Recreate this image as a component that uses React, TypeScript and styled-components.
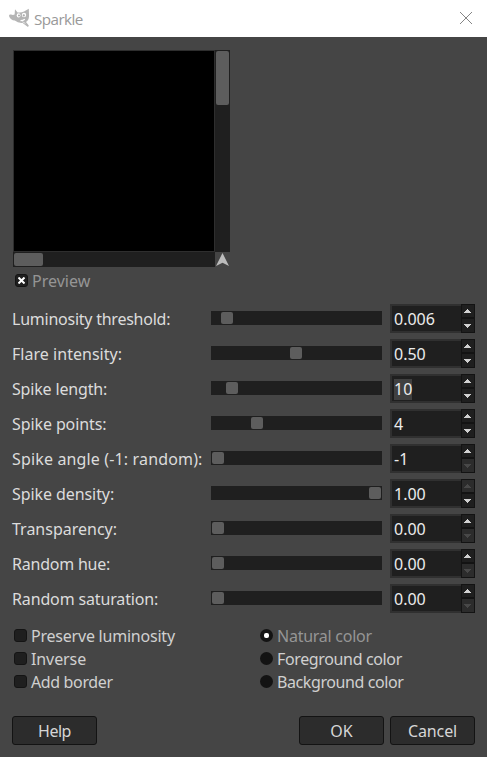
import React from "react";
import styled, { createGlobalStyle } from "styled-components";

const Global = createGlobalStyle`
  * { box-sizing: border-box; }
  body { margin: 0; background: #454545; }
`;

const Dialog = styled.div`
  width: 487px;
  height: 757px;
  overflow: hidden;
  background: #454545;
  color: #dcdcdc;
  font: 16px/22px "Noto Sans", "Open Sans", sans-serif;
  white-space: nowrap;
`;

const TitleBar = styled.header`
  display: flex;
  align-items: center;
  height: 37px;
  padding: 0 15px 1px 9px;
  background: #fff;
`;

const Title = styled.h1`
  flex: 1;
  margin: 0 0 0 5px;
  padding-top: 2px;
  color: #999;
  font: 400 15.2px/20px "Open Sans", sans-serif;
  letter-spacing: -0.55px;
`;

const Body = styled.main`
  padding: 13px 12px 0;
`;

const Preview = styled.section`
  display: grid;
  grid-template-columns: 202px 15px;
  grid-template-rows: 202px 15px;
  width: 217px;
  margin-left: 1px;
`;

const Canvas = styled.div`
  border: 1px solid #2e2e2e;
  background: #000;
`;

const Scroll = styled.div`
  padding: 1px;
  background: #1f1f1f;
`;

const ScrollThumb = styled.div<{ $w: number; $h: number }>`
  width: ${(p) => p.$w}px;
  height: ${(p) => p.$h}px;
  border-radius: 2px;
  background: #5d5d5d;
`;

const NavCell = styled.div`
  display: flex;
  padding: 1px 0 0 1px;
`;

const Text = styled.span<{ $ls?: number; $dim?: boolean }>`
  letter-spacing: ${(p) => p.$ls ?? 0}px;
  color: ${(p) => (p.$dim ? "#959595" : "inherit")};
`;

const PreviewToggle = styled.label`
  display: flex;
  align-items: center;
  gap: 4px;
  height: 23px;
  margin: 2px 0 0 3px;
`;

const CheckBox = styled.span`
  display: flex;
  align-items: center;
  justify-content: center;
  width: 13px;
  height: 13px;
  border: 1px solid #141414;
  border-radius: 3px;
  background: #1f1f1f;
`;

const Controls = styled.section`
  display: grid;
  gap: 6px;
  margin-top: 12px;
`;

const Row = styled.div`
  display: grid;
  grid-template-columns: 199px 171px 8px 85px;
  height: 29px;
  align-items: center;
`;

const RowLabel = styled(Text)`
  padding-top: 1px;
`;

const Track = styled.div`
  height: 14px;
  margin-bottom: 1px;
  padding: 1px 0;
  background: #1f1f1f;
`;

const Thumb = styled.div<{ $at: number }>`
  width: 12px;
  height: 12px;
  margin-left: ${(p) => p.$at}px;
  border-radius: 2px;
  background: #5d5d5d;
`;

const Spin = styled.div`
  display: grid;
  grid-column: 4;
  grid-template-columns: 71px 14px;
  height: 29px;
`;

const Entry = styled.div`
  display: flex;
  align-items: center;
  border: 2px solid #303030;
  border-right: 0;
  background: #1f1f1f;
  padding: 1px 0 0 2px;
  color: #ececec;
`;

const Value = styled.span<{ $selected?: boolean }>`
  line-height: 21px;
  background: ${(p) => (p.$selected ? "#404040" : "transparent")};
`;

const Steps = styled.div`
  display: grid;
  grid-template-rows: 14px 15px;
`;

const Step = styled.div<{ $off?: boolean }>`
  display: flex;
  align-items: center;
  justify-content: center;
  border: 1px solid #131313;
  background: ${(p) => (p.$off ? "#2c2c2c" : "#1f1f1f")};
  color: ${(p) => (p.$off ? "#484848" : "#d0d0d0")};
`;

const Options = styled.section`
  display: grid;
  grid-template-columns: 246px auto;
  grid-template-rows: repeat(3, 23px);
  grid-auto-flow: column;
  margin: 11px 0 0 2px;
`;

const Option = styled.label`
  display: flex;
  align-items: center;
  gap: 4px;
  color: #d0d0d0;
`;

const Radio = styled.span`
  display: flex;
  align-items: center;
  justify-content: center;
  width: 13px;
  height: 13px;
  border-radius: 50%;
  background: #131313;
`;

const RadioDot = styled.span`
  width: 5px;
  height: 5px;
  border-radius: 2px;
  background: #fff;
`;

const Footer = styled.footer`
  display: grid;
  grid-template-columns: 85px 1fr 85px 85px;
  column-gap: 6px;
  margin-top: 23px;
`;

const Button = styled.button<{ $start?: number; $ls?: number }>`
  grid-column: ${(p) => p.$start ?? "auto"};
  height: 29px;
  padding: 1px 0 0;
  border: 1px solid #131313;
  border-radius: 3px;
  background: #2c2c2c;
  color: #d6d6d6;
  font: inherit;
  letter-spacing: ${(p) => p.$ls ?? 0}px;
`;

const Wilber = () => (
  <svg width="20" height="20" viewBox="0 0 20 20">
    <path
      fill="#b5b5b5"
      d="M0 8Q0 6.2 2 6.6Q4 7.4 5.6 6.6L6 1.2L8.6 4.4Q12 5 15 3.6L19.8 .8L20 7Q20.2 12 17 14L19.8 17.4L19 19L13.6 15Q9 15.4 5.8 12.6Q1.6 12.4 0 8Z"
    />
    <ellipse cx="9.6" cy="7.4" rx="1.9" ry="2.1" fill="#fff" />
    <ellipse cx="15" cy="7" rx="2.2" ry="2.2" fill="#fff" />
    <circle cx="10" cy="7.6" r="1" fill="#aaa" />
    <circle cx="14.8" cy="7.4" r="1.1" fill="#aaa" />
    <path d="M11.5 12.6Q14 12.6 15.8 11.2" fill="none" stroke="#fff" strokeWidth="1.2" />
    <path d="M13.2 13.6L16.4 15.4" fill="none" stroke="#eee" strokeWidth=".8" />
  </svg>
);

const Arrow = ({ down }: { down?: boolean }) => (
  <svg width="8" height="4" viewBox="0 0 8 4" shapeRendering="crispEdges">
    <path
      fill="currentColor"
      d={down ? "M0 0H7V1H6V2H5V3H4V4H3V3H2V2H1V1H0Z" : "M0 4H7V3H6V2H5V1H4V0H3V1H2V2H1V3H0Z"}
    />
  </svg>
);

type Param = {
  label: string;
  ls?: number;
  at: number;
  value: string;
  selected?: boolean;
  minned?: boolean;
  maxed?: boolean;
};

const params: Param[] = [
  { label: "Luminosity threshold:", ls: -0.24, at: 10, value: "0.006" },
  { label: "Flare intensity:", ls: 0.03, at: 79, value: "0.50" },
  { label: "Spike length:", ls: -0.17, at: 15, value: "10", selected: true },
  { label: "Spike points:", ls: -0.1, at: 40, value: "4" },
  { label: "Spike angle (-1: random):", ls: 0.15, at: 1, value: "-1", minned: true },
  { label: "Spike density:", ls: -0.08, at: 158, value: "1.00", maxed: true },
  { label: "Transparency:", at: 1, value: "0.00", minned: true },
  { label: "Random hue:", ls: -0.22, at: 1, value: "0.00", minned: true },
  { label: "Random saturation:", ls: -0.14, at: 1, value: "0.00", minned: true },
];

const toggles = [
  { label: "Preserve luminosity", ls: -0.22 },
  { label: "Inverse", ls: -0.1 },
  { label: "Add border", ls: -0.36 },
];

const colors = [
  { label: "Natural color", ls: -0.25, on: true },
  { label: "Foreground color", ls: -0.36 },
  { label: "Background color", ls: -0.4 },
];

export default function App() {
  return (
    <Dialog>
      <Global />
      <TitleBar>
        <Wilber />
        <Title>Sparkle</Title>
        <svg width="12" height="12" viewBox="0 0 12 12">
          <path d="M0 0L12 12M12 0L0 12" stroke="#858585" strokeWidth="1" />
        </svg>
      </TitleBar>
      <Body>
        <Preview>
          <Canvas />
          <Scroll>
            <ScrollThumb $w={13} $h={54} />
          </Scroll>
          <Scroll>
            <ScrollThumb $w={29} $h={13} />
          </Scroll>
          <NavCell>
            <svg width="14" height="14" viewBox="0 0 14 14">
              <path d="M6.5 0L13 13L6.5 9.8L0 13Z" fill="#bcbcbc" />
            </svg>
          </NavCell>
        </Preview>
        <PreviewToggle>
          <CheckBox>
            <svg width="7" height="7" viewBox="0 0 7 7">
              <path d="M.5 .5L6.5 6.5M6.5 .5L.5 6.5" stroke="#fff" strokeWidth="2" />
            </svg>
          </CheckBox>
          <Text $dim>Preview</Text>
        </PreviewToggle>
        <Controls>
          {params.map((p) => (
            <Row key={p.label}>
              <RowLabel $ls={p.ls}>{p.label}</RowLabel>
              <Track>
                <Thumb $at={p.at} />
              </Track>
              <Spin>
                <Entry>
                  <Value $selected={p.selected}>{p.value}</Value>
                </Entry>
                <Steps>
                  <Step $off={p.maxed}>
                    <Arrow />
                  </Step>
                  <Step $off={p.minned}>
                    <Arrow down />
                  </Step>
                </Steps>
              </Spin>
            </Row>
          ))}
        </Controls>
        <Options>
          {toggles.map((t) => (
            <Option key={t.label}>
              <CheckBox />
              <Text $ls={t.ls}>{t.label}</Text>
            </Option>
          ))}
          {colors.map((c) => (
            <Option key={c.label}>
              <Radio>{c.on && <RadioDot />}</Radio>
              <Text $ls={c.ls} $dim={c.on}>{c.label}</Text>
            </Option>
          ))}
        </Options>
        <Footer>
          <Button $ls={-0.5}>Help</Button>
          <Button $start={3}>OK</Button>
          <Button $ls={-0.1}>Cancel</Button>
        </Footer>
      </Body>
    </Dialog>
  );
}
